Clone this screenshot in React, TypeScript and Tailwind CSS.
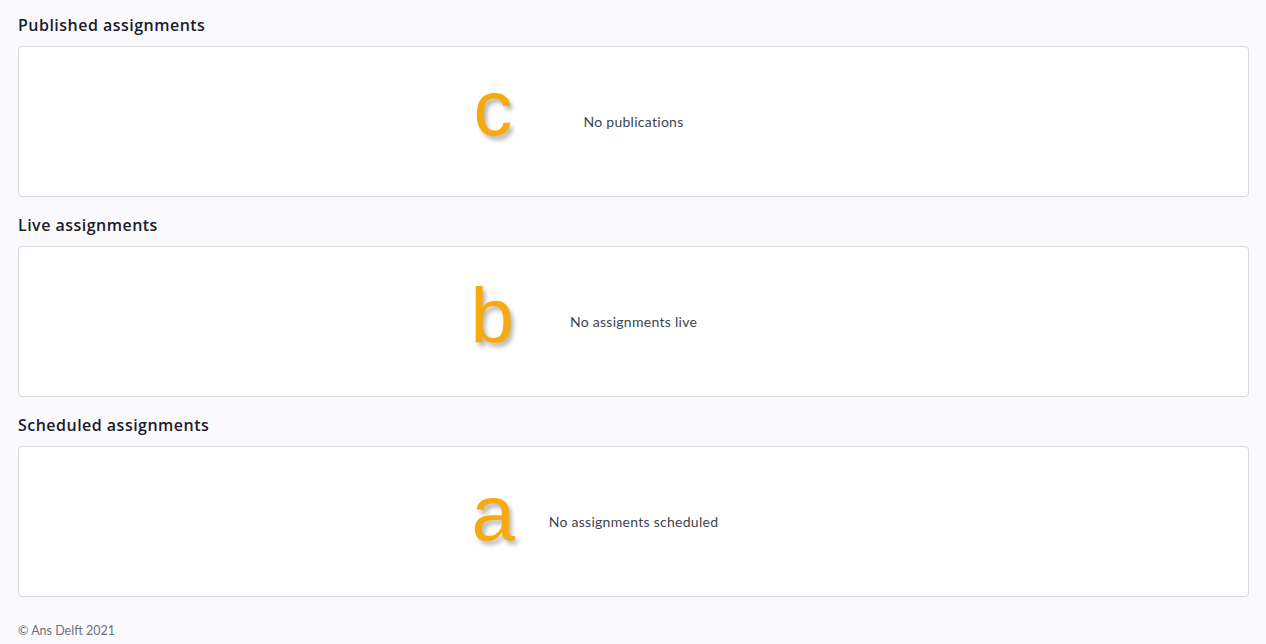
import React from 'react';

interface Section {
  title: string;
  letter: string;
  letterPos: string;
  empty: string;
}

// each empty state has its own letter illustration, placed left of the message
const sections: Section[] = [
  { title: 'Published assignments', letter: 'c', letterPos: 'top-[11px] left-[calc(50%-160px)]', empty: 'No publications' },
  { title: 'Live assignments', letter: 'b', letterPos: 'top-[19px] left-[calc(50%-163px)]', empty: 'No assignments live' },
  { title: 'Scheduled assignments', letter: 'a', letterPos: 'top-[16px] left-[calc(50%-162px)]', empty: 'No assignments scheduled' },
];

function EmptyCard({ letter, letterPos, empty }: Omit<Section, 'title'>) {
  return (
    <div className="relative h-[151px] rounded border border-[#d9d9e0] bg-white flex items-center justify-center">
      <span
        className={`absolute ${letterPos} font-['Liberation_Sans',Arial,sans-serif] text-[78px] leading-[100px] text-[#f7a90d] [text-shadow:3px_4px_4px_rgba(0,0,0,0.28)] select-none`}
      >
        {letter}
      </span>
      <p className="font-['Lato','Noto_Sans',sans-serif] text-[14px] tracking-[0.02em] text-[#3d4354]">{empty}</p>
    </div>
  );
}

export default function App() {
  return (
    <div className="min-h-[644px] bg-[#fafafc] pl-[18px] pr-[17px] pt-[15px] font-['Open_Sans',sans-serif]">
      {sections.map((s) => (
        <section key={s.title} className="pb-[18px]">
          <h2 className="mb-[11px] text-[16px] leading-[20px] font-semibold tracking-[0.03em] text-[#1b1b2b]">
            {s.title}
          </h2>
          <EmptyCard letter={s.letter} letterPos={s.letterPos} empty={s.empty} />
        </section>
      ))}
      <footer className="pt-[7px] font-['Lato','Noto_Sans',sans-serif] text-[12.5px] text-[#6c7080]">
        © Ans Delft 2021
      </footer>
    </div>
  );
}
